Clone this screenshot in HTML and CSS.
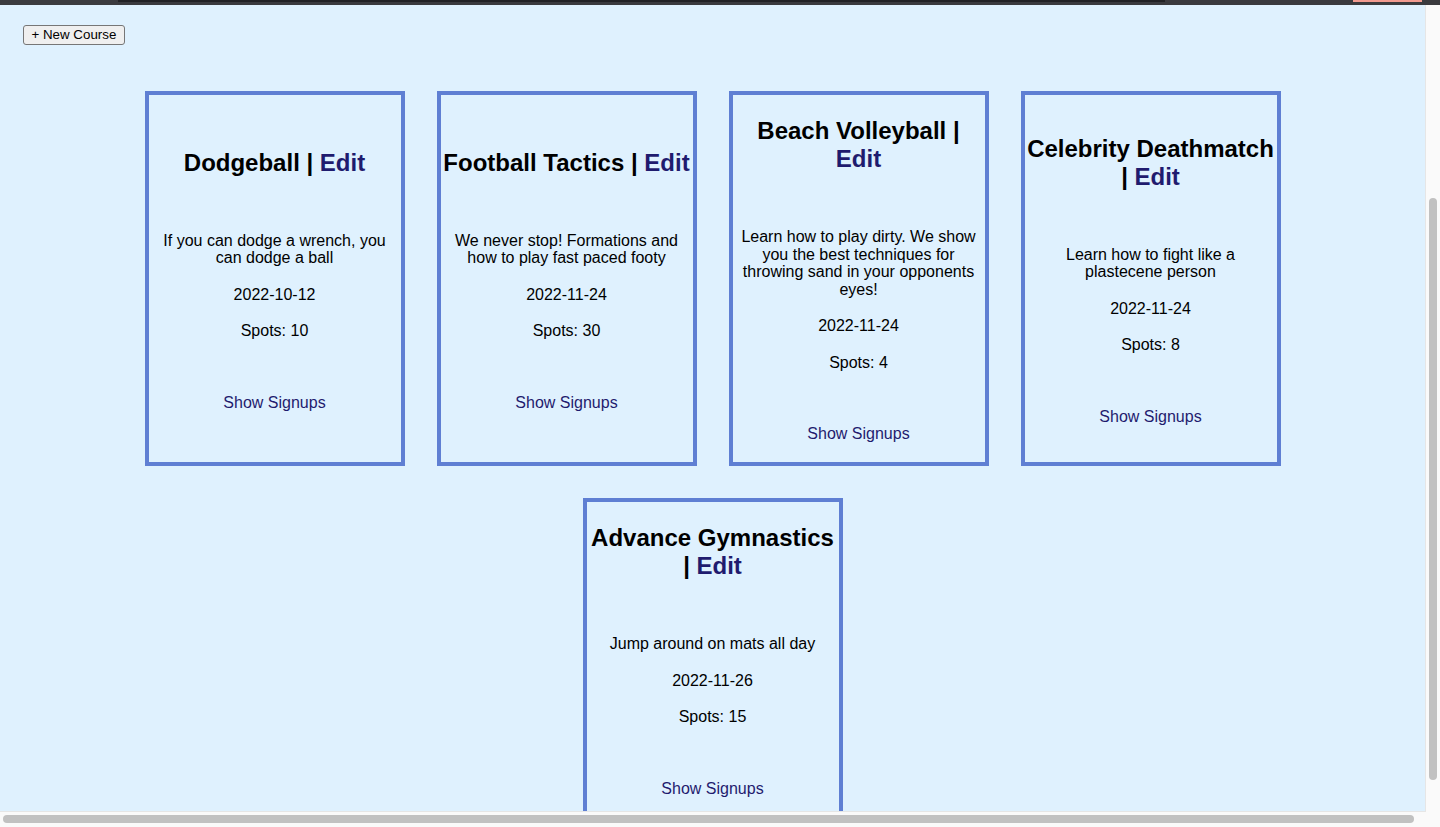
FILE: index.html
```html
<!DOCTYPE html>
<html lang="en">
<head>
<meta charset="utf-8">
<title>Courses</title>
<link rel="stylesheet" href="styles.css">
</head>
<body>
<div class="window">
  <div class="chrome-bar">
    <div class="seg seg-a"></div>
    <div class="seg seg-b"></div>
    <div class="seg seg-c"></div>
    <div class="seg seg-d"></div>
    <div class="seg seg-e"></div>
  </div>
  <div class="main">
    <div class="viewport">
      <div class="toolbar">
        <button class="new-btn" type="button">+ New Course</button>
      </div>
      <div class="cards">
        <div class="card">
          <h2 class="title">Dodgeball | <a class="edit" href="#">Edit</a></h2>
          <p class="desc">If you can dodge a wrench, you can dodge a ball</p>
          <p class="meta">2022-10-12</p>
          <p class="meta">Spots: 10</p>
          <a class="signups" href="#">Show Signups</a>
        </div>
        <div class="card">
          <h2 class="title">Football Tactics | <a class="edit" href="#">Edit</a></h2>
          <p class="desc">We never stop! Formations and how to play fast paced footy</p>
          <p class="meta">2022-11-24</p>
          <p class="meta">Spots: 30</p>
          <a class="signups" href="#">Show Signups</a>
        </div>
        <div class="card">
          <h2 class="title">Beach Volleyball | <a class="edit" href="#">Edit</a></h2>
          <p class="desc">Learn how to play dirty. We show you the best techniques for throwing sand in your opponents eyes!</p>
          <p class="meta">2022-11-24</p>
          <p class="meta">Spots: 4</p>
          <a class="signups" href="#">Show Signups</a>
        </div>
        <div class="card">
          <h2 class="title">Celebrity Deathmatch | <a class="edit" href="#">Edit</a></h2>
          <p class="desc">Learn how to fight like a plastecene person</p>
          <p class="meta">2022-11-24</p>
          <p class="meta">Spots: 8</p>
          <a class="signups" href="#">Show Signups</a>
        </div>
        <div class="card">
          <h2 class="title">Advance Gymnastics | <a class="edit" href="#">Edit</a></h2>
          <p class="desc">Jump around on mats all day</p>
          <p class="meta">2022-11-26</p>
          <p class="meta">Spots: 15</p>
          <a class="signups" href="#">Show Signups</a>
        </div>
      </div>
    </div>
    <div class="vscroll"><div class="vthumb"></div></div>
  </div>
  <div class="hscroll"><div class="hthumb"></div></div>
</div>
</body>
</html>
```

FILE: styles.css
```css
* { box-sizing: border-box; }

html, body {
  margin: 0;
  padding: 0;
  height: 100%;
  overflow: hidden;
}

body {
  font-family: "Liberation Sans", Arial, sans-serif;
  color: #000;
  background: #fafafa;
}

.window {
  display: flex;
  flex-direction: column;
  height: 827px;
  width: 1440px;
}

/* top browser strip */
.chrome-bar {
  height: 5px;
  flex: 0 0 5px;
  display: flex;
  background: #3a3a3e;
}
.seg { height: 100%; }
.seg-a { width: 118px; background: #3b3b3f; }
.seg-b { width: 1047px; background: linear-gradient(#222225 0, #222225 2px, #3a3a3e 2px); }
.seg-c { width: 188px; background: #3a3a3e; }
.seg-d { width: 69px; background: linear-gradient(#f29a8f 0, #f29a8f 2px, #3a3a3e 2px); }
.seg-e { flex: 1; background: #3a3a3e; }

.main {
  flex: 1;
  display: flex;
  min-height: 0;
}

.viewport {
  flex: 1;
  background: #dff1fe;
  overflow: hidden;
  border-right: 1px solid #e6e6e6;
  border-bottom: 1px solid #e6e6e6;
}

.vscroll {
  width: 14px;
  flex: 0 0 14px;
  background: #fafafa;
  padding: 193px 3px 0 3px;
}
.vthumb {
  width: 8px;
  height: 582px;
  border-radius: 4px;
  background: #c1c1c1;
}

.hscroll {
  height: 15px;
  flex: 0 0 15px;
  background: #fafafa;
  padding: 3px 26px 0 3px;
}
.hthumb {
  height: 8px;
  border-radius: 4px;
  background: #c1c1c1;
}

.toolbar {
  padding: 20px 0 0 23px;
}

.new-btn {
  font-family: "Liberation Sans", Arial, sans-serif;
  font-size: 13.33px;
  height: 20px;
  padding: 0 7.5px;
  line-height: 18px;
  color: #000;
  background: #efefef;
  border: 1px solid #767676;
  border-radius: 3px;
}

.cards {
  display: flex;
  flex-wrap: wrap;
  justify-content: center;
  padding-top: 30px;
}

.card {
  width: 260px;
  margin: 16px;
  border: 4px solid #5f7fd3;
  display: flex;
  flex-direction: column;
  justify-content: center;
  align-items: center;
  text-align: center;
  padding-bottom: 19.5px;
}

.title {
  font-size: 24px;
  font-weight: bold;
  line-height: 28px;
  margin: 22px 0 0;
  width: 100%;
}

.edit {
  color: #1f1b6e;
  text-decoration: none;
}

.desc {
  font-size: 16px;
  line-height: 17.5px;
  margin: 55px 0 0;
  padding: 0 7px;
  width: 100%;
}

.meta {
  font-size: 16px;
  line-height: 17.5px;
  margin: 19px 0 0;
}

.signups {
  font-size: 16px;
  line-height: 17.5px;
  margin-top: 54px;
  color: #1f1b6e;
  text-decoration: none;
}
```
